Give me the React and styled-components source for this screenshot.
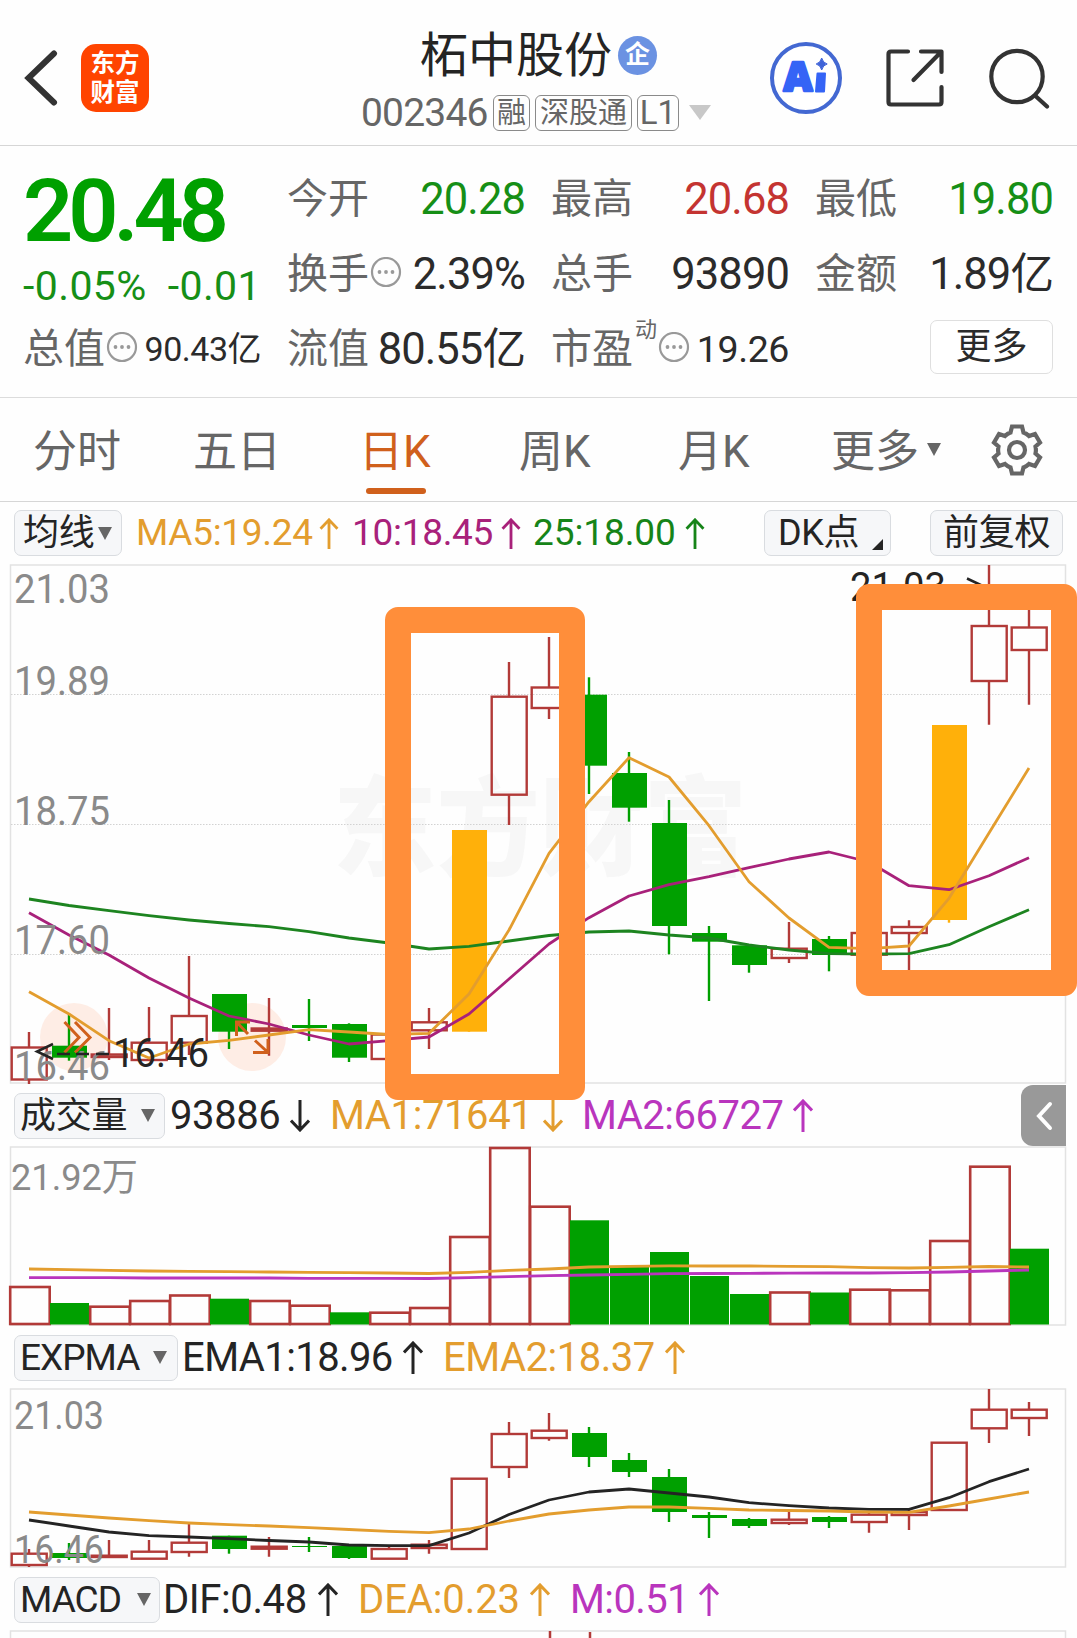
import React from "react";
import styled, { createGlobalStyle } from "styled-components";

const GlobalStyle = createGlobalStyle`
  body {
    margin: 0;
    background: #ffffff;
  }

  * {
    box-sizing: border-box;
  }
`;

const RED = "#b23a38";
const GREEN = "#00a000";
const ORANGE = "#e39d2e";
const MAGENTA = "#a8217a";
const PURPLE = "#b935bd";
const DARK = "#242424";
const ACCENT = "#d0601c";

const Page = styled.div`
  position: relative;
  width: 1077px;
  height: 1638px;
  overflow: hidden;
  background: #fefefe;
  color: ${DARK};
  font-family: Roboto, "Noto Sans CJK SC", sans-serif;
  white-space: nowrap;
`;

/* ---------- header ---------- */

const Header = styled.header`
  display: flex;
  align-items: center;
  height: 146px;
  padding: 11px 0 0 24px;
  border-bottom: 1px solid #d6d6d6;
`;

const AppLogo = styled.div`
  display: flex;
  flex-direction: column;
  align-items: center;
  justify-content: center;
  width: 68px;
  height: 68px;
  margin-left: 23px;
  border-radius: 15px;
  background: #ff4400;
  color: #ffffff;
  font-size: 24.5px;
  font-weight: 700;
  line-height: 29px;
`;

const TitleBlock = styled.div`
  width: 360px;
  height: 122px;
  margin-left: 212px;
`;

const TitleRow = styled.div`
  display: flex;
  align-items: center;
  height: 65px;
  padding: 12px 0 0 59px;
  font-size: 48px;
  line-height: 60px;
`;

const CompanyBadge = styled.span`
  display: flex;
  align-items: center;
  justify-content: center;
  width: 39px;
  height: 39px;
  margin: 0 0 1px 6px;
  border-radius: 50%;
  background: #6b92e2;
  color: #ffffff;
  font-size: 25px;
  font-weight: 700;
  line-height: 36px;
`;

const CodeRow = styled.div`
  display: flex;
  align-items: center;
  height: 57px;
  padding-top: 4px;
  color: #666666;
`;

const Code = styled.span`
  width: 132px;
  font-size: 39px;
  letter-spacing: -0.8px;
`;

const Tag = styled.span`
  display: flex;
  align-items: center;
  justify-content: center;
  width: ${({ $w }) => $w}px;
  height: 36px;
  margin-right: 5px;
  border: 1px solid #8a8a8a;
  border-radius: 6px;
  font-size: ${({ $size }) => $size || 29}px;
  line-height: 32px;
`;

const Caret = styled.span`
  width: 0;
  height: 0;
  margin-left: ${({ $ml }) => $ml || 0}px;
  border-left: ${({ $half }) => $half || 7.5}px solid transparent;
  border-right: ${({ $half }) => $half || 7.5}px solid transparent;
  border-top: ${({ $h }) => $h || 13}px solid ${({ $color }) => $color || "#666666"};
`;

const HeaderIcon = styled.div`
  display: flex;
  margin: 0 0 ${({ $mb }) => $mb || 0}px ${({ $ml }) => $ml}px;
`;

/* ---------- quote ---------- */

const Quote = styled.section`
  display: grid;
  grid-template-columns: repeat(4, 238px);
  grid-template-rows: repeat(3, 75px);
  column-gap: 26px;
  height: 252px;
  padding: 15px 0 0 23px;
  border-bottom: 1px solid #dcdcdc;
`;

const PriceCell = styled.div`
  grid-row: span 2;
  color: ${GREEN};
`;

const Price = styled.div`
  height: 99px;
  font-size: 88px;
  font-weight: 600;
  letter-spacing: -5px;
  line-height: 99px;
`;

const Change = styled.div`
  display: flex;
  justify-content: space-between;
  color: #168f16;
  font-size: 41px;
  letter-spacing: 0.4px;
  line-height: 52px;
`;

const Cell = styled.div`
  display: flex;
  align-items: center;
`;

const Label = styled.span`
  color: #666666;
  font-size: 41px;
  line-height: 60px;
`;

const Figure = styled.span`
  margin-left: auto;
  padding-top: ${({ $size }) => ($size ? 0 : 2)}px;
  color: ${({ $color }) => $color || "#2b2b2b"};
  font-size: ${({ $size }) => $size || 43.5}px;
  letter-spacing: ${({ $ls }) => ($ls === undefined ? -0.9 : $ls)}px;
  line-height: 60px;
`;

const Superscript = styled.span`
  align-self: flex-start;
  margin: 7px 0 0 2px;
  color: #666666;
  font-size: 22px;
  line-height: 24px;
`;

const MoreButton = styled.button`
  width: 124px;
  height: 54px;
  margin: 0 0 3px 115px;
  padding: 0;
  border: 1px solid #dfdfdf;
  border-radius: 7px;
  background: #ffffff;
  color: #2b2b2b;
  font: inherit;
  font-size: 36px;
  line-height: 50px;
`;

/* ---------- period tabs ---------- */

const Tabs = styled.nav`
  display: flex;
  align-items: center;
  height: 104px;
  padding-left: 33px;
  border-bottom: 1px solid #d6d6d6;
`;

const Tab = styled.div`
  display: flex;
  flex-direction: column;
  width: ${({ $w }) => $w}px;
  height: 72px;
  margin-top: 18px;
  color: ${({ $active }) => ($active ? ACCENT : "#666666")};
  font-size: 44px;
  line-height: 58px;

  &::after {
    content: "";
    width: 60px;
    height: 6px;
    margin: 7px 0 0 7px;
    border-radius: 3px;
    background: ${({ $active }) => ($active ? ACCENT : "transparent")};
  }
`;

const SettingsButton = styled.div`
  display: flex;
  margin-left: 49px;
`;

/* ---------- indicator rows ---------- */

const Toolbar = styled.div`
  display: flex;
  align-items: center;
  height: ${({ $h }) => $h || 55}px;
  padding: ${({ $pt }) => $pt || 0}px 0 0 14px;
`;

const Chip = styled.div`
  display: flex;
  align-items: center;
  width: ${({ $w }) => $w}px;
  height: 46px;
  margin-left: ${({ $ml }) => $ml || 0}px;
  padding-left: ${({ $pl }) => $pl || 8}px;
  border: 1px solid #d9dce0;
  border-radius: 7px;
  background: #f6f7f9;
  font-size: ${({ $size }) => $size || 36}px;
  letter-spacing: ${({ $ls }) => $ls || -0.3}px;
  line-height: 44px;
`;

const CornerMark = styled.span`
  align-self: flex-end;
  width: 0;
  height: 0;
  margin: 0 0 5px 13px;
  border-left: 11px solid transparent;
  border-bottom: 11px solid ${DARK};
`;

const Readout = styled.div`
  display: flex;
  align-items: center;
  justify-content: space-between;
  width: ${({ $w }) => $w}px;
  margin-left: ${({ $ml }) => $ml}px;
  color: ${({ $color }) => $color};
  font-size: ${({ $size }) => $size || 40}px;
  letter-spacing: ${({ $ls }) => ($ls === undefined ? -0.4 : $ls)}px;
  line-height: 46px;
`;

const ChartSvg = styled.svg`
  display: block;
  width: 1077px;
  height: ${({ $h }) => $h}px;
  overflow: visible;
`;

const CollapseButton = styled.button`
  display: flex;
  align-items: center;
  justify-content: center;
  width: 45px;
  height: 61px;
  margin-left: auto;
  margin-right: 11px;
  padding: 0;
  border: 0;
  border-radius: 12px 0 0 12px;
  background: #999999;
`;

/* highlight frames drawn by hand over the chart */
const Marker = styled.div`
  position: absolute;
  left: ${({ $x }) => $x}px;
  top: ${({ $y }) => $y}px;
  width: ${({ $w }) => $w}px;
  height: ${({ $h }) => $h}px;
  border: 26.5px solid #ff8e3a;
  border-radius: 13px;
`;

/* ---------- icons ---------- */

const BackIcon = () => (
  <svg width="34" height="58" viewBox="0 0 34 58" fill="none" stroke="#333" strokeWidth="6" strokeLinecap="round">
    <path d="M30 4.5 4.5 29 30 53.5" />
  </svg>
);

const AiIcon = () => (
  <svg width="74" height="74" viewBox="0 0 74 74">
    <circle cx="37" cy="37" r="34" fill="#fff" stroke="#4368d2" strokeWidth="4" />
    <text
      x="14.5"
      y="50"
      fill="#3564f6"
      stroke="#3564f6"
      strokeWidth="2.5"
      strokeLinejoin="round"
      fontFamily="Open Sans"
      fontSize="40"
      fontWeight="800"
      textLength="29"
      lengthAdjust="spacingAndGlyphs"
    >
      A
    </text>
    <path d="M48.5 32.5h7.5l-1 18h-8z" fill="#3564f6" stroke="#3564f6" strokeWidth="2" strokeLinejoin="round" />
    <path d="M52.7 17q1.2 4.8 5.5 6-4.3 1-5.5 6-1.2-5-5.5-6 4.3-1.2 5.5-6z" fill="#3f63d8" stroke="#3f63d8" />
  </svg>
);

const ShareIcon = () => (
  <svg width="60" height="60" viewBox="0 0 60 60" fill="none" stroke="#333" strokeWidth="4.2" strokeLinecap="round" strokeLinejoin="round">
    <path d="M23 3.5H6q-2.5 0-2.5 2.5v48q0 2.5 2.5 2.5h48q2.5 0 2.5-2.5V39" />
    <path d="M36 3.5h20.5V24M56 4 28.5 32" />
  </svg>
);

const SearchIcon = () => (
  <svg width="62" height="62" viewBox="0 0 62 62" fill="none" stroke="#333" strokeWidth="4.2" strokeLinecap="round">
    <circle cx="29" cy="29.5" r="25.7" />
    <path d="M47.5 49 59 59.5" />
  </svg>
);

const DotsIcon = () => (
  <svg width="33" height="34" viewBox="-2 0 33 34" style={{ flex: "none" }}>
    <circle cx="15" cy="15" r="14" fill="none" stroke="#999" strokeWidth="2.2" />
    <circle cx="8.5" cy="15" r="1.9" fill="#999" />
    <circle cx="15" cy="15" r="1.9" fill="#999" />
    <circle cx="21.5" cy="15" r="1.9" fill="#999" />
  </svg>
);

const GearIcon = () => (
  <svg width="54" height="54" viewBox="-27 -27 54 54" fill="none" stroke="#666" strokeWidth="4.2">
    <path d="M-5-23.5H5L6.5-17.5Q9.5-16.5 12-14L18-16 23-7.5 18.5-3.5Q19.3 0 18.5 3.5L23 7.5 18 16 12 14Q9.5 16.5 6.5 17.5L5 23.5H-5L-6.5 17.5Q-9.5 16.5-12 14L-18 16-23 7.5-18.5 3.5Q-19.3 0-18.5-3.5L-23-7.5-18-16-12-14Q-9.5-16.5-6.5-17.5Z" />
    <circle r="8" />
  </svg>
);

const Arrow = ({ down, size = 33 }) => (
  <svg width="20" height={size} viewBox="0 0 20 33" fill="none" stroke="currentColor" strokeWidth="3">
    <path d={down ? "M10 1v30M1 21.5 10 31l9-9.5" : "M10 33V2.5M1 11.5 10 2l9 9.5"} />
  </svg>
);

/* ---------- chart data, one entry for each trading day ---------- */

const dayX = (i) => 29 + i * 40;

// [colour, high, body top, body bottom, low]
const dailyCandles = [
  ["r", 1032, 1047.5, 1079.5, 1084],
  ["g", 1015, 1045.7, 1057.7, 1060.7],
  ["r", 1008, 1054.5, 1057, 1060],
  ["r", 1007, 1042.7, 1060, 1060],
  ["r", 956, 1016, 1042.7, 1055],
  ["g", 994, 994, 1031.7, 1049],
  ["r", 998, 1028.5, 1030.7, 1055.7],
  ["g", 999, 1025, 1028, 1041],
  ["g", 1023.3, 1024, 1057.7, 1062],
  ["r", 1034, 1034.5, 1059, 1065],
  ["r", 1008, 1022.3, 1030.3, 1049],
  ["y", 830, 830, 1031.7, 1031.7],
  ["r", 662, 696.7, 794.7, 825],
  ["r", 637, 687.5, 708, 719],
  ["g", 677.3, 694.7, 765.7, 794],
  ["g", 752, 773, 807.7, 821.7],
  ["g", 800, 823, 926, 954.3],
  ["g", 926, 933, 941.7, 1001],
  ["g", 945.3, 945.3, 965, 972.7],
  ["r", 922, 948.7, 958, 963],
  ["g", 936, 939, 955, 971.3],
  ["r", 933, 933, 954.7, 958],
  ["r", 920.3, 927, 933, 975],
  ["y", 725, 725, 920, 922.7],
  ["r", 565, 626, 681, 724.7],
  ["r", 600, 627.5, 650, 704.7],
];

const expmaCandles = [
  ["r", 1549, 1553.7, 1565, 1567],
  ["g", 1543, 1553, 1558, 1560],
  ["r", 1540, 1555.7, 1557, 1558],
  ["r", 1540, 1551.7, 1558.7, 1558],
  ["r", 1522, 1542.7, 1552, 1556.7],
  ["g", 1535.7, 1535.7, 1549, 1553.7],
  ["r", 1537, 1546.7, 1548.7, 1556.7],
  ["g", 1537, 1546, 1547, 1552],
  ["g", 1546, 1546, 1558, 1559],
  ["r", 1547, 1549, 1558.7, 1558],
  ["r", 1540, 1544.7, 1548, 1553.7],
  ["r", 1479, 1478.7, 1549, 1549],
  ["r", 1422, 1434, 1467, 1478],
  ["r", 1413, 1430.7, 1438, 1440.7],
  ["g", 1427, 1433, 1457, 1467],
  ["g", 1453, 1460, 1472, 1477],
  ["g", 1469, 1477, 1512, 1522],
  ["g", 1512, 1515, 1518, 1538],
  ["g", 1518, 1519, 1526, 1528],
  ["r", 1511, 1519.7, 1523, 1525],
  ["g", 1516, 1517, 1522, 1528],
  ["r", 1511, 1514.7, 1522, 1532.7],
  ["r", 1509, 1512, 1515, 1530],
  ["r", 1443, 1442.7, 1510, 1510],
  ["r", 1389, 1409.7, 1428.3, 1443],
  ["r", 1402, 1409.7, 1418, 1436],
];

const volumes = [
  ["r", 1287], ["g", 1303], ["r", 1306.7], ["r", 1301], ["r", 1295.5], ["g", 1298.7], ["r", 1301],
  ["r", 1305.7], ["g", 1312.3], ["r", 1312.7], ["r", 1308], ["r", 1237], ["r", 1148], ["r", 1206.7],
  ["g", 1220.3], ["g", 1267], ["g", 1252], ["g", 1276], ["g", 1294], ["r", 1292.5], ["g", 1292.5],
  ["r", 1289.7], ["r", 1290.3], ["r", 1241], ["r", 1166.7], ["g", 1248.7],
];

const ma5 = [991.7, 1014, 1040.7, 1058, 1044, 1040.3, 1035, 1029.7, 1032, 1034.5, 1033.3, 994, 930, 853.3, 801.7, 757.7, 777, 825.7, 881.7, 918, 947.3, 948.7, 946, 898.3, 833, 768];
const ma10 = [912.7, 935, 955, 978, 998, 1016, 1024, 1035, 1044, 1040.7, 1037, 1014, 979, 944, 917.7, 896, 884.7, 876.7, 867.7, 859, 852, 862, 885.7, 889.7, 875.7, 857.7];
const ma25 = [899, 905.5, 910.7, 915.7, 920, 923.5, 926.7, 931.7, 938, 943, 949, 946.3, 941, 935.5, 932, 931, 935, 938, 945, 950, 953.7, 954, 953.7, 944.7, 926.7, 909.7];
const ema1 = [1520, 1526, 1532, 1535.7, 1537, 1538.7, 1540.5, 1542, 1545, 1545.7, 1545.7, 1533, 1514.5, 1500, 1492, 1489, 1493, 1497, 1502.7, 1505.7, 1508, 1509.3, 1509.3, 1497.7, 1481.7, 1469];
const ema2 = [1512, 1515, 1518, 1520.7, 1523, 1524.7, 1526, 1527.7, 1529.5, 1531.3, 1532.7, 1529, 1521, 1514, 1510, 1507, 1507, 1508.3, 1510, 1510.5, 1511, 1512, 1512.3, 1506, 1499, 1492];
const volMa1 = [1269, 1269.7, 1270.3, 1271, 1271.3, 1271.7, 1272, 1272.3, 1272.7, 1273, 1273.5, 1272.3, 1270.3, 1269, 1267, 1266.3, 1265.8, 1266, 1266, 1266.3, 1266.6, 1267.6, 1268, 1267.3, 1266.5, 1267];
const volMa2 = [1277.7, 1277.7, 1277.7, 1278, 1278, 1278, 1278, 1278.3, 1278.3, 1278.3, 1278.5, 1277.7, 1276.7, 1275.7, 1275, 1274.3, 1273.7, 1273.5, 1273.3, 1273.2, 1273, 1273, 1272.7, 1272, 1271, 1270];

const Candles = ({ data }) =>
  data.map(([kind, high, top, bottom, low], i) => {
    const x = dayX(i);
    if (kind === "r") {
      return (
        <g key={i} stroke={RED} strokeWidth="2.4" fill="none">
          <path d={`M${x} ${high}V${top}M${x} ${bottom}V${Math.max(low, bottom)}`} />
          <rect x={x - 17.3} y={top} width="35" height={bottom - top} />
        </g>
      );
    }
    const color = kind === "y" ? "#ffb00a" : GREEN;
    return (
      <g key={i} fill={color} stroke="none">
        <rect x={x - 1.2} y={high} width="2.4" height={low - high} />
        <rect x={x - 17} y={top} width="35" height={bottom - top} />
      </g>
    );
  });

const Line = ({ values, color }) => (
  <polyline
    points={values.map((v, i) => `${dayX(i)},${v}`).join(" ")}
    fill="none"
    stroke={color}
    strokeWidth="2.8"
    strokeLinejoin="round"
  />
);

const Frame = ({ y, h }) => (
  <rect x="10.5" y={y} width="1055" height={h} fill="none" stroke="#e2e2e2" strokeWidth="1.5" />
);

const AxisText = ({ x = 14, y, w = 96, size = 40, color = "#8a8a8a", children }) => (
  <text x={x} y={y} fontSize={size} fill={color} textLength={w} lengthAdjust="spacingAndGlyphs">
    {children}
  </text>
);

const PriceChart = () => (
  <ChartSvg $h={530} viewBox="0 558 1077 530">
    <text x="333" y="867" fontSize="108" fontWeight="900" fill="#f7f7f7" textLength="414" lengthAdjust="spacingAndGlyphs">
      东方财富
    </text>
    <Frame y={565} h={518} />
    {[694.5, 824.5, 954.5].map((y) => (
      <path key={y} d={`M11 ${y}H1065`} stroke="#d2d2d2" strokeDasharray="1.5 1.5" />
    ))}
    <circle cx="74" cy="1037" r="34" fill="#feede5" />
    <circle cx="252" cy="1037" r="34" fill="#feede5" />
    <Candles data={dailyCandles} />
    <Line values={ma25} color="#1d8420" />
    <Line values={ma10} color={MAGENTA} />
    <Line values={ma5} color={ORANGE} />
    <AxisText y={602.5}>21.03</AxisText>
    <AxisText y={695}>19.89</AxisText>
    <AxisText y={825}>18.75</AxisText>
    <AxisText y={954}>17.60</AxisText>
    <AxisText y={1080}>16.46</AxisText>
    <g fill="none" stroke={ACCENT} strokeWidth="3">
      <path d="M64.5 1022 79 1037.5 64.5 1052.5M75 1022 90 1037.5 75 1052.5" />
      <path d="M250 1022H236.5V1036M237 1022.5 248 1034M253 1052.5H268V1039M267.5 1052 255 1040.5" />
    </g>
    <path d="M53 1044 37 1051.5 53 1059M57 1054H70M76 1054H89M96 1054H109" fill="none" stroke={DARK} strokeWidth="2.5" />
    <AxisText x={113} y={1066.5} color={DARK}>16.46</AxisText>
    <AxisText x={850} y={601} color={DARK}>21.03</AxisText>
    <path d="M967 578.5 983 586 967 593" fill="none" stroke={DARK} strokeWidth="2.5" />
  </ChartSvg>
);

const VolumeChart = () => (
  <ChartSvg $h={187} viewBox="0 1143 1077 187">
    <Frame y={1147} h={178} />
    {volumes.map(([kind, top], i) =>
      kind === "r" ? (
        <rect key={i} x={dayX(i) - 18.8} y={top} width="39.5" height={1324 - top} fill="#fefefe" stroke={RED} strokeWidth="2.6" />
      ) : (
        <rect key={i} x={dayX(i) - 19} y={top} width="39" height={1324.5 - top} fill={GREEN} />
      )
    )}
    <Line values={volMa2} color={PURPLE} />
    <Line values={volMa1} color={ORANGE} />
    <AxisText x={11} y={1190} w={127} size={37.5}>21.92万</AxisText>
  </ChartSvg>
);

const ExpmaChart = () => (
  <ChartSvg $h={187} viewBox="0 1385 1077 187">
    <Frame y={1389} h={178} />
    <Candles data={expmaCandles} />
    <Line values={ema1} color={DARK} />
    <Line values={ema2} color={ORANGE} />
    <AxisText y={1429} w={90} size={38}>21.03</AxisText>
    <AxisText y={1563} w={90} size={38}>16.46</AxisText>
  </ChartSvg>
);

const MacdChart = () => (
  <ChartSvg $h={11} viewBox="0 1627 1077 11">
    <Frame y={1631} h={60} />
    <path d="M550 1631V1638M590 1632V1638" stroke={RED} strokeWidth="2.5" />
  </ChartSvg>
);

function App() {
  return (
    <Page>
      <GlobalStyle />
      <Header>
        <BackIcon />
        <AppLogo>
          <span>东方</span>
          <span>财富</span>
        </AppLogo>
        <TitleBlock>
          <TitleRow>
            柘中股份<CompanyBadge>企</CompanyBadge>
          </TitleRow>
          <CodeRow>
            <Code>002346</Code>
            <Tag $w={37}>融</Tag>
            <Tag $w={97}>深股通</Tag>
            <Tag $w={42} $size={33}>L1</Tag>
            <Caret $ml={5} $half={11} $h={15} $color="#c8c8c8" />
          </CodeRow>
        </TitleBlock>
        <HeaderIcon $ml={48}>
          <AiIcon />
        </HeaderIcon>
        <HeaderIcon $ml={42}>
          <ShareIcon />
        </HeaderIcon>
        <HeaderIcon $ml={43} $mb={1}>
          <SearchIcon />
        </HeaderIcon>
      </Header>

      <Quote>
        <PriceCell>
          <Price>20.48</Price>
          <Change>
            <span>-0.05%</span>
            <span>-0.01</span>
          </Change>
        </PriceCell>
        <Cell>
          <Label>今开</Label>
          <Figure $color="#168f16">20.28</Figure>
        </Cell>
        <Cell>
          <Label>最高</Label>
          <Figure $color="#c43431">20.68</Figure>
        </Cell>
        <Cell>
          <Label>最低</Label>
          <Figure $color="#168f16">19.80</Figure>
        </Cell>
        <Cell>
          <Label>换手</Label>
          <DotsIcon />
          <Figure>2.39%</Figure>
        </Cell>
        <Cell>
          <Label>总手</Label>
          <Figure>93890</Figure>
        </Cell>
        <Cell>
          <Label>金额</Label>
          <Figure>1.89亿</Figure>
        </Cell>
        <Cell>
          <Label>总值</Label>
          <DotsIcon />
          <Figure $size={34} $ls={-0.5}>90.43亿</Figure>
        </Cell>
        <Cell>
          <Label>流值</Label>
          <Figure>80.55亿</Figure>
        </Cell>
        <Cell>
          <Label>市盈</Label>
          <Superscript>动</Superscript>
          <DotsIcon />
          <Figure $size={37.5} $ls={-0.4}>19.26</Figure>
        </Cell>
        <Cell>
          <MoreButton>更多</MoreButton>
        </Cell>
      </Quote>

      <Tabs>
        <Tab $w={160}>分时</Tab>
        <Tab $w={166}>五日</Tab>
        <Tab $w={160} $active>日K</Tab>
        <Tab $w={159}>周K</Tab>
        <Tab $w={153}>月K</Tab>
        <Tab $w={96}>更多</Tab>
        <Caret />
        <SettingsButton>
          <GearIcon />
        </SettingsButton>
      </Tabs>

      <Toolbar $h={56} $pt={6}>
        <Chip $w={108}>
          均线
          <Caret $ml={4} />
        </Chip>
        <Readout $w={203} $ml={14} $size={37} $ls={-0.3} $color={ORANGE}>
          MA5:19.24 <Arrow size={31} />
        </Readout>
        <Readout $w={169} $ml={13} $size={37} $ls={-0.3} $color={MAGENTA}>
          10:18.45 <Arrow size={31} />
        </Readout>
        <Readout $w={172} $ml={12} $size={37} $ls={-0.1} $color="#168418">
          25:18.00 <Arrow size={31} />
        </Readout>
        <Chip $w={127} $ml={59} $pl={13}>
          DK点
          <CornerMark />
        </Chip>
        <Chip $w={133} $ml={39} $pl={12}>前复权</Chip>
      </Toolbar>
      <PriceChart />

      <Toolbar>
        <Chip $w={151} $pl={5}>
          成交量
          <Caret $ml={14} />
        </Chip>
        <Readout $w={140} $ml={5} $color={DARK}>
          93886 <Arrow down />
        </Readout>
        <Readout $w={233} $ml={20} $ls={-0.4} $color={ORANGE}>
          MA1:71641 <Arrow down />
        </Readout>
        <Readout $w={231} $ml={19} $ls={-0.5} $color={PURPLE}>
          MA2:66727 <Arrow />
        </Readout>
        <CollapseButton>
          <svg width="20" height="30" viewBox="0 0 20 30" fill="none" stroke="#fff" strokeWidth="4" strokeLinecap="round">
            <path d="M16 3 5 15 16 27" />
          </svg>
        </CollapseButton>
      </Toolbar>
      <VolumeChart />

      <Toolbar>
        <Chip $w={164} $pl={5} $size={37} $ls={-1}>
          EXPMA
          <Caret $ml={14} />
        </Chip>
        <Readout $w={241} $ml={4} $ls={-0.6} $color={DARK}>
          EMA1:18.96 <Arrow />
        </Readout>
        <Readout $w={242} $ml={20} $ls={-0.5} $color={ORANGE}>
          EMA2:18.37 <Arrow />
        </Readout>
      </Toolbar>
      <ExpmaChart />

      <Toolbar>
        <Chip $w={146} $pl={5} $size={37} $ls={-1}>
          MACD
          <Caret $ml={16} />
        </Chip>
        <Readout $w={175} $ml={3} $color={DARK}>
          DIF:0.48 <Arrow />
        </Readout>
        <Readout $w={192} $ml={20} $ls={-0.1} $color={ORANGE}>
          DEA:0.23 <Arrow />
        </Readout>
        <Readout $w={149} $ml={20} $ls={-0.6} $color={PURPLE}>
          M:0.51 <Arrow />
        </Readout>
      </Toolbar>
      <MacdChart />

      <Marker $x={385} $y={607} $w={200} $h={493} />
      <Marker $x={855.5} $y={584} $w={221.5} $h={412} />
    </Page>
  );
}

export default App;
